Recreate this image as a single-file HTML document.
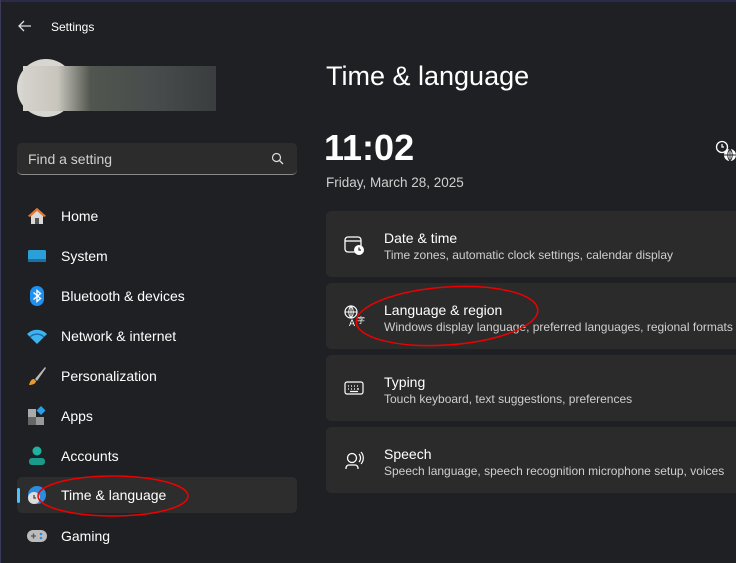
<!DOCTYPE html>
<html><head><style>
*{margin:0;padding:0;box-sizing:border-box}
body{width:736px;height:563px;background:#1f2023;font-family:"Liberation Sans",sans-serif;color:#fff;position:relative;overflow:hidden}
.abs{position:absolute}
.nav{position:absolute;left:17px;width:280px;height:36px;display:flex;align-items:center;font-size:14px}
.nav .ic{position:absolute;left:10px;top:8px;width:20px;height:20px}
.nav span{position:absolute;left:44px}
.card{position:absolute;left:326px;width:420px;height:66px;background:#2b2b2b;border-radius:5px}
.card .t{position:absolute;left:58px;top:19px;font-size:14px}
.card .s{position:absolute;left:58px;top:37px;font-size:12px;color:#cfcfcf;white-space:nowrap}
.card svg{position:absolute;left:18px;top:24px}
</style></head><body>
<div class="abs" style="left:0;top:0;width:736px;height:2px;background:#2a2a4a"></div>
<div class="abs" style="left:0;top:0;width:1px;height:563px;background:#3a3a5a"></div>
<svg class="abs" style="left:17px;top:19px" width="16" height="14"><path d="M14 7H2M7 2L2 7l5 5" stroke="#ddd" stroke-width="1.3" fill="none"/></svg>
<div class="abs" style="left:51px;top:20px;font-size:12px">Settings</div>
<div class="abs" style="left:17px;top:59px;width:58px;height:58px;border-radius:50%;background:#d8d6d0"></div>
<div class="abs" style="left:23px;top:66px;width:193px;height:45px;background:linear-gradient(90deg,#d5d3cc 0%,#c7c5bc 18%,#52564f 35%,#474b4b 70%,#3a3d3f 100%)"></div>
<div class="abs" style="left:17px;top:143px;width:280px;height:32px;background:#2c2c2c;border-radius:5px;border-bottom:1px solid #8a8a8a"></div>
<div class="abs" style="left:28px;top:151px;font-size:14px;color:#d0d0d0">Find a setting</div>
<svg class="abs" style="left:271px;top:152px" width="13" height="13"><circle cx="5.5" cy="5.5" r="4" stroke="#ddd" stroke-width="1.2" fill="none"/><path d="M8.5 8.5l3.5 3.5" stroke="#ddd" stroke-width="1.3"/></svg>

<div class="nav" style="top:198px"><svg class="ic" viewBox="0 0 20 20"><path d="M10 2L1 10h3v8h12v-8h3z" fill="#d9d9d9"/><path d="M10 2L1 10l2 1 7-6 7 6 2-1z" fill="#e8732a"/><rect x="8" y="12" width="4" height="6" fill="#555"/></svg><span>Home</span></div>
<div class="nav" style="top:238px"><svg class="ic" viewBox="0 0 20 20"><rect x="1" y="4" width="18" height="12" rx="1.5" fill="#2a9fd8"/><rect x="1" y="13" width="18" height="3" fill="#1b6fa6"/></svg><span>System</span></div>
<div class="nav" style="top:278px"><svg class="ic" viewBox="0 0 20 20"><rect x="3" y="0" width="14" height="20" rx="7" fill="#1f8ff0"/><path d="M6.5 6.5l7 6-3.5 3V4.5l3.5 3-7 6" stroke="#fff" stroke-width="1.4" fill="none"/></svg><span>Bluetooth &amp; devices</span></div>
<div class="nav" style="top:318px"><svg class="ic" viewBox="0 0 20 20"><path d="M0 8a14 14 0 0 1 20 0L10 18z" fill="#3cb4f0"/><path d="M3 11a10 10 0 0 1 14 0" stroke="#1a6eb0" stroke-width="1.5" fill="none"/></svg><span>Network &amp; internet</span></div>
<div class="nav" style="top:358px"><svg class="ic" viewBox="0 0 20 20"><path d="M18 1L8 13l2 2L19 2z" fill="#bbb"/><path d="M7 13c-3 0-4 3-5 6 3 0 7-1 7-4z" fill="#e89a2e"/></svg><span>Personalization</span></div>
<div class="nav" style="top:398px"><svg class="ic" viewBox="0 0 20 20"><rect x="1" y="3" width="8" height="8" fill="#aaa"/><rect x="1" y="11" width="8" height="8" fill="#666"/><rect x="9" y="11" width="8" height="8" fill="#999"/><path d="M14 0l4.5 4.5L14 9 9.5 4.5z" fill="#2a9fe8"/></svg><span>Apps</span></div>
<div class="nav" style="top:438px"><svg class="ic" viewBox="0 0 20 20"><circle cx="10" cy="5" r="4.5" fill="#20b2a0"/><path d="M2 15a3 3 0 0 1 3-3h10a3 3 0 0 1 3 3v1a3 3 0 0 1-3 3H5a3 3 0 0 1-3-3z" fill="#1a9a8a"/></svg><span>Accounts</span></div>
<div class="abs" style="left:17px;top:477px;width:280px;height:36px;background:#2d2d2d;border-radius:5px"></div>
<div class="abs" style="left:17px;top:488px;width:3px;height:15px;background:#4cc2ff;border-radius:2px"></div>
<div class="nav" style="top:477px"><svg class="ic" viewBox="0 0 20 20"><circle cx="10" cy="10" r="9" fill="#2a8ee0"/><circle cx="7" cy="13" r="6" fill="#ddd"/><path d="M7 10v3h2" stroke="#444" stroke-width="1.3" fill="none"/></svg><span>Time &amp; language</span></div>
<div class="nav" style="top:518px"><svg class="ic" viewBox="0 0 20 20"><rect x="0" y="4" width="20" height="12" rx="6" fill="#bbb"/><path d="M4 10h5M6.5 7.5v5" stroke="#555" stroke-width="1.3"/><circle cx="14" cy="8" r="1.3" fill="#2a8ee0"/><circle cx="14" cy="12" r="1.3" fill="#2a8ee0"/></svg><span>Gaming</span></div>
<svg class="abs" style="left:0;top:0" width="736" height="563"><ellipse cx="113" cy="496" rx="75" ry="20" stroke="#e00" stroke-width="1.5" fill="none"/></svg>

<div class="abs" style="left:326px;top:61px;font-size:27px">Time &amp; language</div>
<div class="abs" style="left:324px;top:127px;font-size:36px;font-weight:bold">11:02</div>
<div class="abs" style="left:326px;top:175px;font-size:13.5px;color:#d0d0d0">Friday, March 28, 2025</div>
<svg class="abs" style="left:715px;top:140px" width="21" height="22"><circle cx="7" cy="7" r="5.5" stroke="#fff" stroke-width="1.3" fill="none"/><path d="M7 4v3h2" stroke="#fff" stroke-width="1.2" fill="none"/><circle cx="15" cy="15" r="6" fill="#fff"/><path d="M9 15h12M15 9v12M15 9c-3 3-3 9 0 12M15 9c3 3 3 9 0 12" stroke="#202020" stroke-width="0.9" fill="none"/></svg>

<div class="card" style="top:211px"><svg width="20" height="20"><rect x="1" y="2" width="16" height="15" rx="3" stroke="#fff" stroke-width="1.3" fill="none"/><path d="M1 6h16" stroke="#fff" stroke-width="1.3"/><circle cx="15" cy="15" r="5" fill="#fff"/><path d="M15 12.5V15h2" stroke="#2b2b2b" stroke-width="1.2" fill="none"/></svg><div class="t">Date &amp; time</div><div class="s">Time zones, automatic clock settings, calendar display</div></div>
<div class="card" style="top:283px"><svg width="22" height="22" style="top:22px"><circle cx="7" cy="7" r="6" stroke="#fff" stroke-width="1.2" fill="none"/><path d="M1 7h12M7 1v12M7 1c-3 3-3 9 0 12M7 1c3 3 3 9 0 12" stroke="#fff" stroke-width="0.9" fill="none"/><text x="5" y="21" font-size="9" fill="#fff" font-family="Liberation Sans">A</text><text x="13" y="18" font-size="8" fill="#fff" font-family="Liberation Sans, Noto Sans CJK SC, sans-serif">字</text></svg><div class="t">Language &amp; region</div><div class="s">Windows display language, preferred languages, regional formats</div></div>
<div class="card" style="top:355px"><svg width="20" height="16" style="top:25px"><rect x="1" y="2" width="18" height="12" rx="2" stroke="#fff" stroke-width="1.2" fill="none"/><path d="M4 6h1M7 6h1M10 6h1M13 6h1M4 9h1M7 9h1M10 9h1M13 9h2M6 11.5h8" stroke="#fff" stroke-width="1.2"/></svg><div class="t">Typing</div><div class="s">Touch keyboard, text suggestions, preferences</div></div>
<div class="card" style="top:427px"><svg width="20" height="20"><circle cx="8" cy="7" r="4.5" stroke="#fff" stroke-width="1.3" fill="none"/><path d="M2 18v-1a3 3 0 0 1 3-3h6a3 3 0 0 1 3 3v1" stroke="#fff" stroke-width="1.3" fill="none"/><path d="M15 3a6 6 0 0 1 0 8M17 1a9 9 0 0 1 0 12" stroke="#fff" stroke-width="1.2" fill="none"/></svg><div class="t">Speech</div><div class="s">Speech language, speech recognition microphone setup, voices</div></div>
<svg class="abs" style="left:0;top:0" width="736" height="563"><ellipse cx="447" cy="316" rx="91" ry="29" stroke="#e00" stroke-width="1.5" fill="none" transform="rotate(-4 447 316)"/></svg>
</body></html>
